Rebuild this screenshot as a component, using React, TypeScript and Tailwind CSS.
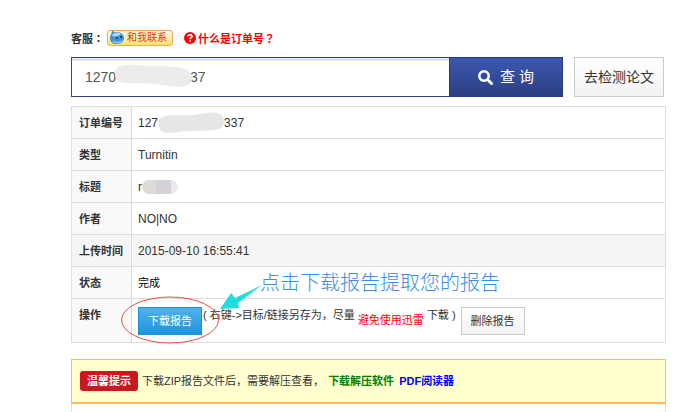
import type { ReactNode } from 'react';

function Row({ label, shaded, children }: { label: string; shaded?: boolean; children: ReactNode }) {
  return (
    <tr className={shaded ? 'bg-[#f5f5f5]' : ''}>
      <th
        scope="row"
        className={`${shaded ? '' : 'bg-[#f9f9f9]'} w-[60px] border border-[#ddd] pt-2 pb-[7px] pl-[7px] text-left align-top font-bold whitespace-nowrap`}
      >
        {label}
      </th>
      <td className="border border-[#ddd] px-[6px] pt-2 pb-[7px] align-top">{children}</td>
    </tr>
  );
}

function ChatBadge() {
  return (
    <a
      href="#chat"
      className="flex h-4 w-[66px] items-center gap-[2px] rounded-[3px] border border-[#f5a860] bg-gradient-to-b from-[#fff6e6] to-[#ffe45e] pl-px text-[10px] leading-[14px] text-[#d0421b]"
    >
      <svg width="16" height="16" viewBox="0 0 16 16" aria-hidden="true" className="shrink-0">
        <path d="M3 0c1 2 3 2 5 2 4 0 7 3 7 6s-3 6-7 6-7-2-7-6c0-3 2-4 2-8z" fill="#3f8fd4" />
        <path d="M4 4c2-2 6-2 8 0-2 2-6 3-9 2z" fill="#a9d8f5" />
        <path d="M8 7v2M12 6v2" stroke="#123a6b" strokeWidth="1.5" />
        <path d="M4 11c2 2 6 2 9 0" stroke="#8cc8f0" strokeWidth="1.5" fill="none" />
      </svg>
      和我联系
    </a>
  );
}

export default function App() {
  return (
    <main className="bg-white pt-[30px] pr-[34px] pl-[71px] font-['Liberation_Sans','Noto_Sans_CJK_SC',sans-serif] text-[11px] leading-4 text-[#333]">
      <div className="mb-[11px] flex h-4 items-center">
        <strong className="w-9">
          客服<span className="font-['Noto_Sans_CJK_JP',sans-serif]">：</span>
        </strong>
        <ChatBadge />
        <a href="#help" className="ml-[11px] flex items-center gap-[2px] font-bold text-[#f00]">
          <svg width="12" height="12" viewBox="0 0 12 12" aria-hidden="true">
            <circle cx="6" cy="6" r="6" fill="#f00" />
            <path d="M4 4.5C4 2.3 8 2.3 8 4.5 8 6 6 5.8 6 7.2M6 8.3v1.5" stroke="#fff" strokeWidth="1.7" fill="none" />
          </svg>
          <span>
            什么是订单号<span className="font-['Noto_Sans_CJK_JP',sans-serif]">？</span>
          </span>
        </a>
      </div>

      <form className="mr-[2px] mb-[9px] flex h-10" onSubmit={(e) => e.preventDefault()}>
        <div className="relative min-w-0 flex-1">
          <input
            type="text"
            aria-label="订单编号"
            defaultValue={'1270' + '\u00a0'.repeat(19) + '37'}
            className="h-10 w-full border border-r-0 border-[#2f4587] bg-white pl-[13px] text-[14px] text-[#555] shadow-[inset_0_3px_0_#e5e5e5] outline-none"
          />
          <svg width="80" height="26" viewBox="0 0 80 26" aria-hidden="true" className="absolute top-[6px] left-[43px]">
            <path d="M6 3C18 0 30 3 40 3c14 0 28 0 35 5 5 4 4 11-1 14-9 4-22 0-34-1-12-2-24 1-34-2C-1 16-1 5 6 3z" fill="#ececed" />
          </svg>
        </div>
        <button
          type="submit"
          className="flex w-[114px] items-center justify-center gap-[7px] border border-[#2a3b7d] bg-gradient-to-b from-[#3c57b0] to-[#2b3f82] text-[15px] text-white"
        >
          <svg width="15" height="15" viewBox="0 0 15 15" aria-hidden="true">
            <circle cx="6" cy="6" r="4.7" stroke="#fff" strokeWidth="2.5" fill="none" />
            <path d="M9.5 9.5l4 4" stroke="#fff" strokeWidth="3" strokeLinecap="round" />
          </svg>
          查 询
        </button>
        <button
          type="button"
          className="ml-[11px] w-[90px] border border-[#ccc] bg-gradient-to-b from-white to-[#f2f2f2] text-[14px] whitespace-nowrap"
        >
          去检测论文
        </button>
      </form>

      <table className="w-full border-collapse border border-[#ddd]">
        <tbody>
          <Row label="订单编号">
            <span className="flex text-[12px]">
              127
              <svg width="66" height="22" viewBox="0 0 66 22" aria-hidden="true" className="-my-[3px]">
                <path d="M4 5c8-3 18-1 28-2 10 0 22-5 30-1 5 3 5 11 1 14-8 4-20 2-31 3-9 0-20 3-27 1C-1 17-1 7 4 5z" fill="#e6e6e7" />
              </svg>
              337
            </span>
          </Row>
          <Row label="类型">
            <span className="text-[12px]">Turnitin</span>
          </Row>
          <Row label="标题">
            <span className="flex text-[12px]">
              r
              <svg width="36" height="16" viewBox="0 0 36 16" aria-hidden="true">
                <path d="M5 1h9v14H5C-2 11-1 4 5 1z" fill="#dcdbd6" />
                <path d="M14 1h15v14H14z" fill="#d6d1d9" />
                <path d="M29 1c9 1 9 13 0 14z" fill="#eae8ed" />
              </svg>
            </span>
          </Row>
          <Row label="作者">
            <span className="text-[12px]">NO|NO</span>
          </Row>
          <Row label="上传时间" shaded>
            <span className="text-[12px]">2015-09-10 16:55:41</span>
          </Row>
          <Row label="状态">
            <div className="relative text-black">
              完成
              <p className="absolute -top-[6px] left-[122px] text-[20px] leading-7 font-light whitespace-nowrap text-[#3a8ee6]">
                点击下载报告提取您的报告
              </p>
            </div>
          </Row>
          <Row label="操作">
            <div className="relative flex h-7 items-start whitespace-nowrap">
              <button
                type="button"
                className="h-7 w-16 shrink-0 border border-[#1f8fd6] bg-gradient-to-b from-[#4db3ee] to-[#1b93de] text-white"
              >
                下载报告
              </button>
              <span className="ml-px">(&nbsp;右键-&gt;目标/链接另存为，尽量</span>
              <span className="px-[3px] pt-[5px] text-[#f00]">避免使用迅雷</span>
              <span>下载&nbsp;)</span>
              <button
                type="button"
                className="ml-[5px] h-7 w-16 shrink-0 border border-[#ccc] bg-gradient-to-b from-white to-[#f2f2f2]"
              >
                删除报告
              </button>
              <svg
                width="146"
                height="62"
                viewBox="0 0 146 62"
                aria-hidden="true"
                className="pointer-events-none absolute -top-[22px] -left-[17px]"
              >
                <ellipse cx="49" cy="35" rx="48.5" ry="23" fill="none" stroke="#f04a4a" />
                <path d="M99 24l11-16 4 5 27-13-24 18 1 5z" fill="#1fdede" />
              </svg>
            </div>
          </Row>
        </tbody>
      </table>

      <p className="mt-4 flex h-[45px] items-center border border-b-2 border-[#fdbb60] bg-[#ffffcf] pl-2 whitespace-nowrap">
        <strong className="mr-1 rounded-[3px] bg-[#c7191f] px-[7px] py-[2px] text-white">温馨提示</strong>
        <span className="mr-1">下载ZIP报告文件后，需要解压查看，</span>
        <a href="#unzip" className="mr-[5px] font-bold text-[#008000]">下载解压软件</a>
        <a href="#pdf" className="font-bold text-[#00f]">PDF阅读器</a>
      </p>
      <div className="h-2 border-x border-[#ddd]" />
    </main>
  );
}
